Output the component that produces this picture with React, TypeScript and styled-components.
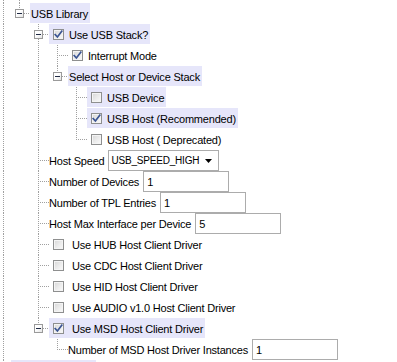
import React from "react";
import styled, { createGlobalStyle, css } from "styled-components";

const GlobalStyle = createGlobalStyle`
  html, body {
    margin: 0;
    padding: 0;
    background: #fff;
    overflow: hidden;
  }
  body {
    font-family: "Liberation Sans", Arial, sans-serif;
    font-size: 11px;
    letter-spacing: -0.2px;
    color: #000;
  }
`;

const LINE = "#a0a0a0";
const HILITE = "#e6e6fa";
const dotV = `repeating-linear-gradient(to bottom, ${LINE} 0 1px, transparent 1px 2px)`;
const dotH = `repeating-linear-gradient(to right, ${LINE} 0 1px, transparent 1px 2px)`;

type Conn = "none" | "pipe" | "tee" | "elbow" | "box";

const colWidth = (col: number) => (col === 0 ? 11 : 19);
const colCenter = (col: number) => (col === 0 ? 3 : 8);

const Tree = styled.div`
  display: flex;
  flex-direction: column;
`;

const Row = styled.div<{ $h?: number }>`
  display: flex;
  align-items: flex-start;
  height: ${({ $h }) => $h ?? 21}px;
`;

const Guide = styled.span<{ $col: number; $kind: Conn; $below?: boolean }>`
  flex: none;
  display: flex;
  align-items: center;
  box-sizing: border-box;
  width: ${({ $col }) => colWidth($col)}px;
  height: 100%;
  padding-left: ${({ $col }) => colCenter($col) - 4}px;
  background-repeat: no-repeat;

  ${({ $col, $kind, $below }) => {
    const cx = colCenter($col);
    const w = colWidth($col);
    switch ($kind) {
      case "pipe":
        return css`
          background-image: ${dotV};
          background-size: 1px 100%;
          background-position: ${cx}px 0;
        `;
      case "tee":
        return css`
          background-image: ${dotV}, ${dotH};
          background-size: 1px 100%, ${w - cx}px 1px;
          background-position: ${cx}px 0, ${cx}px 10px;
        `;
      case "elbow":
        return css`
          background-image: ${dotV}, ${dotH};
          background-size: 1px 11px, ${w - cx}px 1px;
          background-position: ${cx}px 0, ${cx}px 10px;
        `;
      case "box":
        return css`
          background-image: ${dotV}, ${$below ? dotV : "none"}, ${dotH};
          background-size: 1px 6px, 1px 6px, ${w - cx - 5}px 1px;
          background-position: ${cx}px 0, ${cx}px 15px, ${cx + 5}px 10px;
        `;
      default:
        return "";
    }
  }}
`;

const Expander = styled.span`
  position: relative;
  display: block;
  box-sizing: border-box;
  width: 9px;
  height: 9px;
  border: 1px solid #9a9a9a;
  background: linear-gradient(135deg, #ffffff 40%, #e4e4e4);

  &::after {
    content: "";
    position: absolute;
    left: 1px;
    top: 3px;
    width: 5px;
    height: 1px;
    background: #1f2a44;
  }
`;

const Label = styled.span<{ $selected?: boolean; $gap: number; $pad: number }>`
  flex: none;
  display: inline-flex;
  align-items: center;
  gap: ${({ $gap }) => $gap}px;
  height: 21px;
  padding: 0 2px 0 ${({ $pad }) => $pad}px;
  white-space: nowrap;
  background: ${({ $selected }) =>
    $selected ? `linear-gradient(${HILITE}, ${HILITE}) 0 0 / 100% 20px no-repeat` : "none"};
`;

const SelectionStub = styled.span<{ $width: number }>`
  flex: none;
  width: ${({ $width }) => $width}px;
  height: 20px;
  background: ${HILITE};
`;

const Box = styled.span`
  flex: none;
  display: flex;
  align-items: center;
  justify-content: center;
  box-sizing: border-box;
  width: 11px;
  height: 11px;
  border: 1px solid #8e8f8f;
  background: linear-gradient(135deg, #d6d6d6 0%, #ececec 55%, #fafafa 100%);
  box-shadow: inset 0 0 0 1px #f4f4f4;
`;

const Field = styled.input`
  flex: none;
  box-sizing: border-box;
  width: 86px;
  height: 21px;
  margin: 0;
  padding: 0 3px;
  border: 1px solid #acacac;
  font: inherit;
  letter-spacing: inherit;
  color: #000;
  background: #fff;
  outline: none;
`;

const Select = styled.span`
  flex: none;
  display: flex;
  align-items: center;
  gap: 4px;
  box-sizing: border-box;
  width: 111px;
  height: 21px;
  padding: 0 6px 0 2px;
  border: 1px solid #acacac;
  background: #fff;
`;

const SelectText = styled.span`
  flex: 1;
  overflow: hidden;
  font-size: 10px;
  letter-spacing: -0.2px;
`;

function Checkbox({ checked }: { checked?: boolean }) {
  return (
    <Box>
      {checked && (
        <svg width="9" height="9" viewBox="0 0 9 9">
          <path
            d="M1.2 4.6 L3.4 7 L7.8 1.2"
            fill="none"
            stroke="#3b5594"
            strokeWidth="1.7"
            strokeLinecap="square"
          />
        </svg>
      )}
    </Box>
  );
}

type Node = {
  text: string;
  check?: boolean;
  selected?: boolean;
  wide?: boolean;
  select?: string;
  input?: string;
  children?: Node[];
};

const driver = (name: string, check = false, extra?: Partial<Node>): Node => ({
  text: `Use ${name} Host Client Driver`,
  check,
  wide: true,
  ...extra,
});

const library: Node = {
  text: "USB Library",
  selected: true,
  children: [
    {
      text: "Use USB Stack?",
      check: true,
      selected: true,
      children: [
        { text: "Interrupt Mode", check: true },
        {
          text: "Select Host or Device Stack",
          selected: true,
          children: [
            { text: "USB Device", check: false, selected: true },
            { text: "USB Host (Recommended)", check: true, selected: true },
            { text: "USB Host ( Deprecated)", check: false },
          ],
        },
      ],
    },
    { text: "Host Speed", select: "USB_SPEED_HIGH" },
    { text: "Number of Devices", input: "1" },
    { text: "Number of TPL Entries", input: "1" },
    { text: "Host Max Interface per Device", input: "5" },
    driver("HUB"),
    driver("CDC"),
    driver("HID"),
    driver("AUDIO v1.0"),
    driver("MSD", true, {
      selected: true,
      children: [{ text: "Number of MSD Host Driver Instances", input: "1" }],
    }),
  ],
};

function NodeLabel({ node }: { node: Node }) {
  const hasCheck = node.check !== undefined;
  const hasField = node.select !== undefined || node.input !== undefined;
  return (
    <Label
      $selected={node.selected}
      $gap={hasCheck ? (node.wide ? 8 : 5) : 4}
      $pad={hasCheck ? 4 : hasField ? 0 : 1}
    >
      {hasCheck && <Checkbox checked={node.check} />}
      <span>{node.text}</span>
      {node.select !== undefined && (
        <Select>
          <SelectText>{node.select}</SelectText>
          <svg width="7" height="4" viewBox="0 0 7 4">
            <path d="M0 0 H7 L3.5 4 Z" fill="#000" />
          </svg>
        </Select>
      )}
      {node.input !== undefined && <Field defaultValue={node.input} />}
    </Label>
  );
}

function renderNode(node: Node, depth: number, guides: boolean[], isLast: boolean): React.ReactNode[] {
  const hasKids = !!node.children?.length;
  const rows: React.ReactNode[] = [
    <Row key={`${depth}-${node.text}`}>
      {guides.map((g, i) => (
        <Guide key={i} $col={i} $kind={g ? "pipe" : "none"} />
      ))}
      <Guide $col={depth} $kind={hasKids ? "box" : isLast ? "elbow" : "tee"} $below={!isLast}>
        {hasKids && <Expander />}
      </Guide>
      <NodeLabel node={node} />
    </Row>,
  ];
  node.children?.forEach((child, i, all) => {
    rows.push(...renderNode(child, depth + 1, [...guides, !isLast], i === all.length - 1));
  });
  return rows;
}

export default function App() {
  return (
    <>
      <GlobalStyle />
      <Tree>
        <Row $h={3}>
          <Guide $col={0} $kind="pipe" />
          <Guide $col={1} $kind="pipe" />
        </Row>
        {renderNode(library, 1, [true], true)}
        <Row>
          <Guide $col={0} $kind="tee" />
          <SelectionStub $width={85} />
        </Row>
      </Tree>
    </>
  );
}
